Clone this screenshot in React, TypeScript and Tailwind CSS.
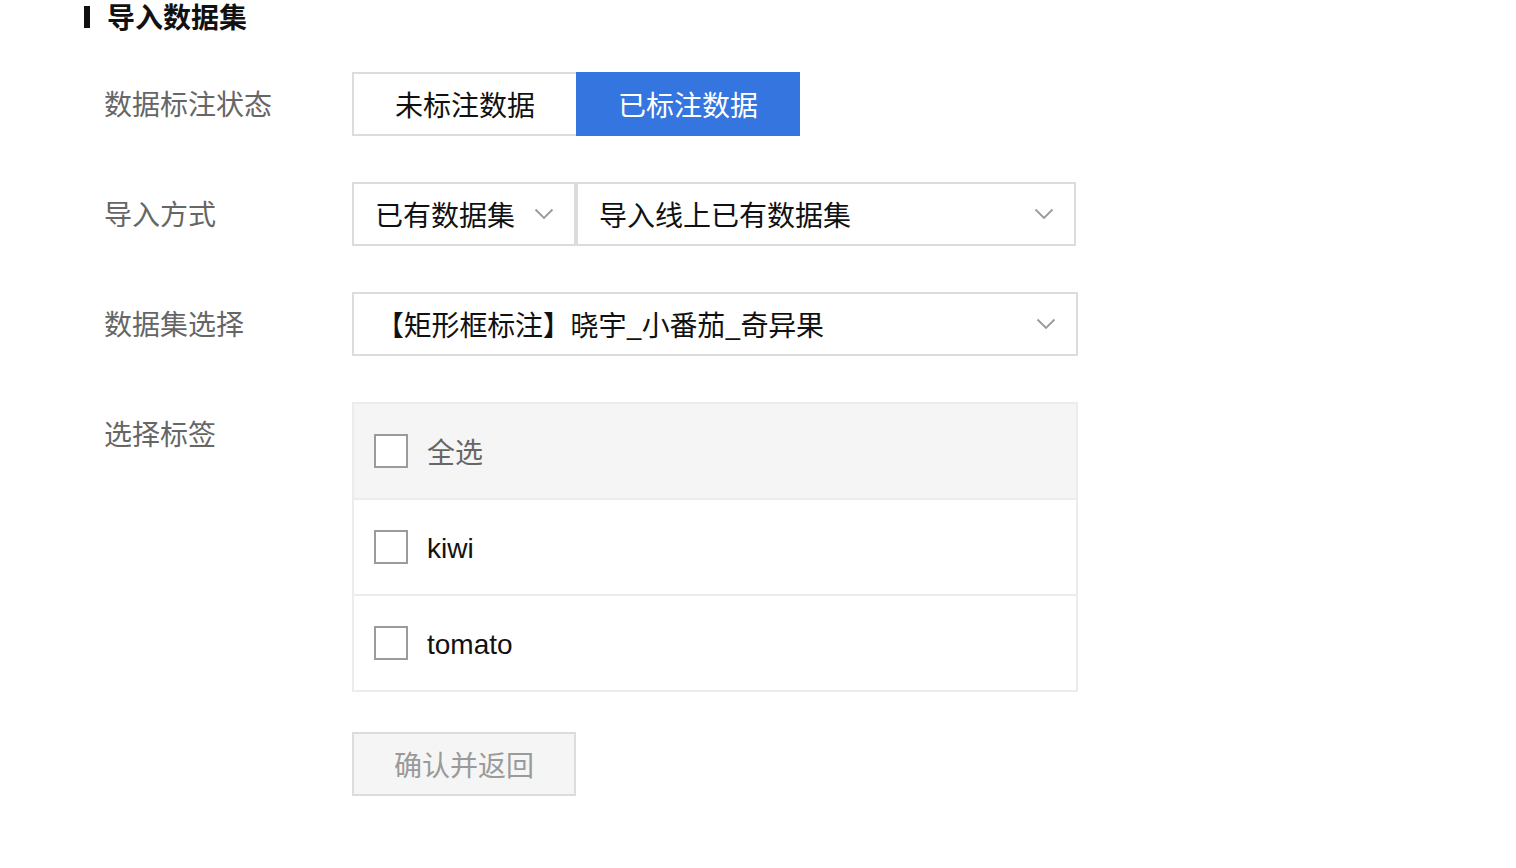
import React from 'react';

const font = { fontFamily: '"Noto Sans CJK SC", "Noto Sans", sans-serif' };
const latin = { fontFamily: '"Liberation Sans", "Noto Sans CJK SC", sans-serif' };

function Chevron() {
  return (
    <svg width="20" height="12" viewBox="0 0 20 12" fill="none" className="shrink-0">
      <path d="M1.5 1.5 L10 10 L18.5 1.5" stroke="#9a9a9a" strokeWidth="1.8" />
    </svg>
  );
}

function Checkbox() {
  return <span className="h-[34px] w-[34px] shrink-0 border-2 border-[#9b9b9b] bg-white" />;
}

function Row({ label, children, top = false }: { label: string; children: React.ReactNode; top?: boolean }) {
  return (
    <div className={`flex ${top ? 'items-start' : 'items-center'}`}>
      <div className={`w-[248px] shrink-0 text-[28px] leading-[40px] text-[#666] ${top ? 'mt-[11px]' : '-mt-[2px]'}`}>
        {label}
      </div>
      {children}
    </div>
  );
}

export default function App() {
  return (
    <div className="min-h-screen bg-white pl-[84px]" style={font}>
      <div className="flex h-[33px] items-center gap-[17px]">
        <span className="h-[22px] w-[6px] bg-[#111]" />
        <h1 className="text-[28px] font-bold leading-[33px] text-[#111]">导入数据集</h1>
      </div>

      <div className="ml-[20px] mt-[39px] flex flex-col gap-[46px]">
        <Row label="数据标注状态">
          <div className="flex h-[64px]">
            <button className="w-[224px] border-2 border-r-0 border-[#dcdcdc] bg-white text-[28px] text-[#111]">
              未标注数据
            </button>
            <button className="w-[224px] bg-[#3575e0] text-[28px] text-white">已标注数据</button>
          </div>
        </Row>

        <Row label="导入方式">
          <div className="flex h-[64px]">
            <div className="flex w-[224px] items-center justify-between border-2 border-[#dcdcdc] pl-[21px] pr-[20px] text-[28px] text-[#111]">
              <span>已有数据集</span>
              <Chevron />
            </div>
            <div className="flex w-[500px] items-center justify-between border-2 border-[#dcdcdc] pl-[21px] pr-[20px] text-[28px] text-[#111]">
              <span>导入线上已有数据集</span>
              <Chevron />
            </div>
          </div>
        </Row>

        <Row label="数据集选择">
          <div className="flex h-[64px] w-[726px] items-center justify-between border-2 border-[#dcdcdc] pl-[22px] pr-[20px] text-[28px] text-[#111]">
            <span className="tracking-[-0.2px]">【矩形框标注】晓宇_小番茄_奇异果</span>
            <Chevron />
          </div>
        </Row>

        <Row label="选择标签" top>
          <div className="flex w-[726px] flex-col border-2 border-[#ececec]">
            <div className="flex h-[96px] items-center gap-[19px] border-b-2 border-[#ececec] bg-[#f5f5f5] pl-[20px]">
              <Checkbox />
              <span className="text-[28px] text-[#666]">全选</span>
            </div>
            <div className="flex h-[96px] items-center gap-[19px] border-b-2 border-[#ececec] pl-[20px]">
              <Checkbox />
              <span className="pt-[3px] text-[28px] text-[#111]" style={latin}>kiwi</span>
            </div>
            <div className="flex h-[94px] items-center gap-[19px] pl-[20px]">
              <Checkbox />
              <span className="pt-[3px] text-[28px] text-[#111]" style={latin}>tomato</span>
            </div>
          </div>
        </Row>

        <div className="-mt-[6px] ml-[248px]">
          <button className="h-[64px] w-[224px] border-2 border-[#dcdcdc] bg-[#f5f5f5] text-[28px] text-[#9a9a9a]">
            确认并返回
          </button>
        </div>
      </div>
    </div>
  );
}
